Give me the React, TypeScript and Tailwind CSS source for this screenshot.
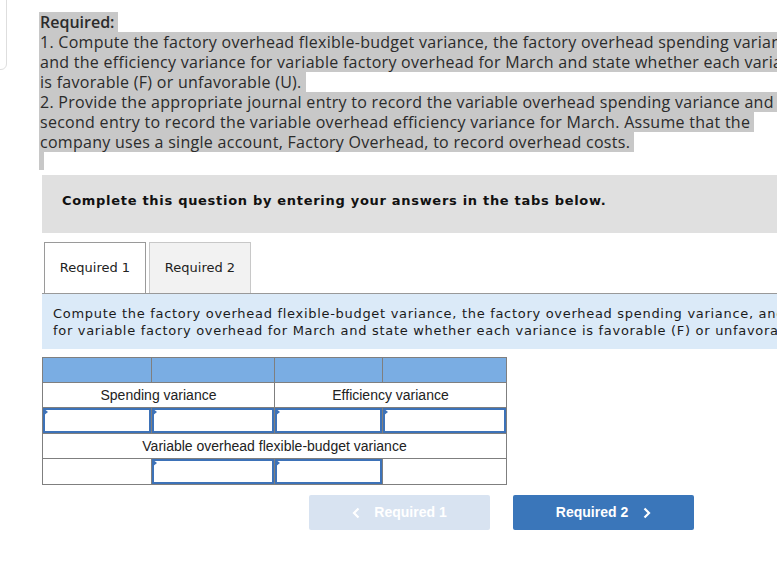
import React from "react";

const topLines: string[] = [
  "1. Compute the factory overhead flexible-budget variance, the factory overhead spending variance,",
  "and the efficiency variance for variable factory overhead for March and state whether each variance",
  "is favorable (F) or unfavorable (U).",
  "2. Provide the appropriate journal entry to record the variable overhead spending variance and a",
  "second entry to record the variable overhead efficiency variance for March. Assume that the",
  "company uses a single account, Factory Overhead, to record overhead costs.",
];

function InputCell() {
  return (
    <td className="border border-[#7f7f7f] p-0 h-[25px]">
      <div className="relative h-[25px] border-2 border-[#3d72b8] bg-white">
        <div className="absolute left-[-2px] top-[-2px] w-0 h-0 border-t-[4px] border-b-[4px] border-l-[5px] border-t-transparent border-b-transparent border-l-[#3d72b8]" />
      </div>
    </td>
  );
}

export default function App() {
  return (
    <div className="relative w-[777px] h-[578px] overflow-hidden bg-white">
      <div className="absolute left-[-12px] top-[-12px] w-[19px] h-[82px] border border-[#dedede] rounded-[6px]" />
      <div className="pt-[12px] pl-[39px] w-[1000px]">
        <div className="text-[16px] leading-[20px] text-[#2b2b2b] font-['Open_Sans',sans-serif]">
          <div className="whitespace-nowrap">
            <span className="inline-block bg-[#c8c8c8] pl-[1px] pr-[3px] font-semibold">Required:</span>
          </div>
          {topLines.map((l, i) => (
            <div key={i} className="whitespace-nowrap">
              <span className="inline-block bg-[#c8c8c8] pl-[1px] pr-[4px] tracking-[0.28px]">{l}</span>
            </div>
          ))}
          <div className="h-[18px] w-[5px] bg-[#c8c8c8]" />
        </div>

        <div className="ml-[3px] mt-[5px] h-[58px] bg-[#e0e0e0] flex items-center pl-[20px] pb-[6px] font-['DejaVu_Sans',Verdana,sans-serif] font-bold text-[13px] tracking-[0.7px] text-[#111]">
          Complete this question by entering your answers in the tabs below.
        </div>

        <div className="ml-[3px] mt-[9px] flex items-end font-['DejaVu_Sans',Verdana,sans-serif] text-[13px] text-[#222]">
          <div className="ml-[2px] w-[102px] h-[51px] border border-b-0 border-[#9a9a9a] bg-white flex items-center justify-center">
            Required 1
          </div>
          <div className="ml-[3px] w-[102px] h-[51px] border border-b-0 border-[#c8c8c8] bg-[#f2f2f2] flex items-center justify-center">
            Required 2
          </div>
        </div>
        <div className="ml-[3px] border-t border-[#999] bg-[#dbeaf8] h-[56px] pt-[11px] pl-[11px] font-['DejaVu_Sans',Verdana,sans-serif] text-[13px] tracking-[0.7px] leading-[17px] text-[#1b1b1b] whitespace-nowrap">
          <div>Compute the factory overhead flexible-budget variance, the factory overhead spending variance, and the efficiency variance</div>
          <div>for variable factory overhead for March and state whether each variance is favorable (F) or unfavorable (U).</div>
        </div>

        <div className="ml-[3px] mt-[8px]">
          <table className="border-collapse font-['Liberation_Sans',Arial,sans-serif] text-[14px] text-[#222] table-fixed w-[465px]">
            <colgroup>
              <col className="w-[109px]" />
              <col className="w-[123px]" />
              <col className="w-[108px]" />
              <col className="w-[124px]" />
            </colgroup>
            <tbody>
              <tr className="h-[25px]">
                <td className="border border-[#7f7f7f] bg-[#7aade3]" />
                <td className="border border-[#7f7f7f] bg-[#7aade3]" />
                <td className="border border-[#7f7f7f] bg-[#7aade3]" />
                <td className="border border-[#7f7f7f] bg-[#7aade3]" />
              </tr>
              <tr className="h-[25px]">
                <td colSpan={2} className="border border-[#7f7f7f] text-center leading-[16px]">Spending variance</td>
                <td colSpan={2} className="border border-[#7f7f7f] text-center leading-[16px]">Efficiency variance</td>
              </tr>
              <tr className="h-[26px]">
                <InputCell />
                <InputCell />
                <InputCell />
                <InputCell />
              </tr>
              <tr className="h-[25px]">
                <td colSpan={4} className="border border-[#7f7f7f] text-center leading-[16px]">Variable overhead flexible-budget variance</td>
              </tr>
              <tr className="h-[25px]">
                <td className="border border-[#7f7f7f]" />
                <InputCell />
                <InputCell />
                <td className="border border-[#7f7f7f]" />
              </tr>
            </tbody>
          </table>
        </div>

        <div className="mt-[10px] ml-[270px] flex gap-[23px] font-['Liberation_Sans',Arial,sans-serif] font-bold text-[14px] text-white">
          <div className="w-[181px] h-[35px] rounded-[2px] bg-[#d8e3f1] flex items-center justify-center gap-[14px]">
            <svg width="8" height="12" viewBox="0 0 8 12" fill="none" stroke="white" strokeWidth="2.2"><path d="M6.5 1.5 L2 6 L6.5 10.5" /></svg>
            <span>Required 1</span>
          </div>
          <div className="w-[181px] h-[35px] rounded-[2px] bg-[#3a76ba] flex items-center justify-center gap-[15px]">
            <span>Required 2</span>
            <svg width="8" height="12" viewBox="0 0 8 12" fill="none" stroke="white" strokeWidth="2.2"><path d="M1.5 1.5 L6 6 L1.5 10.5" /></svg>
          </div>
        </div>
      </div>
    </div>
  );
}
